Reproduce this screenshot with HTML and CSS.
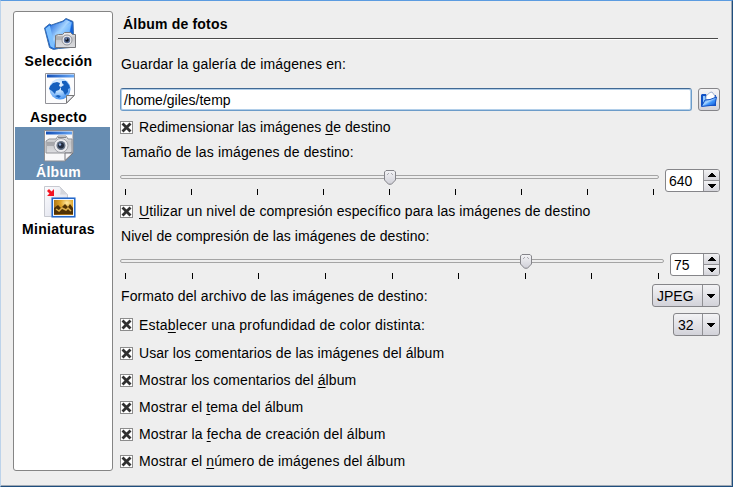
FILE: index.html
```html
<!DOCTYPE html>
<html lang="es">
<head>
<meta charset="utf-8">
<title>Álbum de fotos</title>
<link rel="stylesheet" href="styles.css">
</head>
<body>
<svg class="defs" width="0" height="0">
  <defs>
    <linearGradient id="blue" x1="0" y1="0" x2="1" y2="1"><stop offset="0" stop-color="#0b58d8"/><stop offset=".45" stop-color="#a8d6ff"/><stop offset=".6" stop-color="#3c92fa"/><stop offset="1" stop-color="#0750cf"/></linearGradient>
    <linearGradient id="silver" x1="0" y1="0" x2="0" y2="1"><stop offset="0" stop-color="#f4f4f5"/><stop offset=".35" stop-color="#c5c6c9"/><stop offset="1" stop-color="#dcdde0"/></linearGradient>
    <radialGradient id="globe" cx=".4" cy=".3" r=".75"><stop offset="0" stop-color="#fff"/><stop offset=".45" stop-color="#b9dcff"/><stop offset="1" stop-color="#3b8df0"/></radialGradient>
    <linearGradient id="bar" gradientUnits="userSpaceOnUse" x1="4" y1="0" x2="30" y2="0"><stop offset="0" stop-color="#1450b8"/><stop offset="1" stop-color="#66a6f4"/></linearGradient>
    <radialGradient id="gold" cx=".65" cy=".25" r=".8"><stop offset="0" stop-color="#ffe9a0"/><stop offset=".35" stop-color="#e0a62c"/><stop offset="1" stop-color="#8a5408"/></radialGradient>
    <linearGradient id="page" x1="0" y1="0" x2="1" y2="1"><stop offset="0" stop-color="#fdfdff"/><stop offset="1" stop-color="#d9dce8"/></linearGradient>
    <linearGradient id="knob" x1="0" y1="0" x2="0" y2="1"><stop offset="0" stop-color="#f4f4f6"/><stop offset="1" stop-color="#d0d0d8"/></linearGradient>
    <symbol id="x" viewBox="0 0 13 13"><rect x=".5" y=".5" width="12" height="12" fill="#fff" stroke="#8c8c8c"/><path d="M3.500 3.500l6 6M9.500 3.500l-6 6" stroke="#303030" stroke-width="2.800" stroke-linecap="square"/></symbol>
    <symbol id="thumb" viewBox="0 0 12 15"><path d="M2 .5h8L11.500 2v8L7.500 14.200h-3L.5 10V2z" fill="url(#knob)" stroke="#85858a"/><path d="M3 4.500h1M8 4.500h1M4 3.500h1M7 3.500h1" stroke="#aaaab0"/></symbol>
    <symbol id="down" viewBox="0 0 8 4"><path d="M0 0h8v1H7v1H6v1H5v1H3V3H2V2H1V1H0z"/></symbol>
  </defs>
</svg>
<div class="window">
  <nav class="sidebar">
    <div class="item">
      <svg width="34" height="34" viewBox="0 0 34 34">
        <path d="M1.500 11l5-4 2 1L20 4l3-2.500 7 3 .5 14-3 12-12 1-5 1-4-2z" fill="#1261d8" stroke="#3f6fa8"/>
        <path d="M2.500 11.500l4-3 5 5 0 18-4-2z" fill="#7dc0ff"/>
        <path d="M7 9l13-4 3-2.500 6 3-3 15-14 10z" fill="url(#blue)"/>
        <path d="M12 16L28 6l-2 12-13 9z" fill="#9acfff" opacity=".65"/>
        <path d="M12.500 18.500l3-1h4l2-2h6l2 2h3v13h-20z" fill="url(#silver)" stroke="#77787c"/>
        <path d="M13 20h7M13 22h6" stroke="#999"/>
        <circle cx="24" cy="23" r="5" fill="#ededf0" stroke="#909298"/><circle cx="24" cy="23" r="3.200" fill="#5a6f97"/><circle cx="24" cy="23" r="1.800" fill="#10151f"/><circle cx="23.200" cy="22" r=".7" fill="#a7c4f2"/>
      </svg>
      <span>Selección</span>
    </div>
    <div class="item second">
      <svg width="34" height="34" viewBox="0 0 34 34">
        <path d="M2.500 1.500h29v22l-8 8h-21z" fill="#fcfcfd" stroke="#929298"/>
        <path d="M4 4h27" stroke="url(#bar)" stroke-width="3"/>
        <circle cx="17" cy="17" r="10.500" fill="url(#globe)"/>
        <path d="M7 14l3-3 4-1 3 1-1 3 2 1-2 3-3 1-1 3-3-3-3-2zM19 9l4 0 3 4 1 3-2 1 0 3-3 3-2-4-2-1 0-3 3-2-2-2zM12 24l3-1 3 1-2 2z" fill="#155fbd"/>
        <path d="M23.500 31v-7.500h7.500z" fill="#efeff4" stroke="#777"/>
      </svg>
      <span>Aspecto</span>
    </div>
    <div class="item selected">
      <svg width="34" height="34" viewBox="0 0 34 34">
        <path d="M1.500 2.500h28.500v22.500l-8 8H1.500z" fill="#f8f8f9" stroke="#8d8d91"/>
        <path d="M3 5h26" stroke="url(#bar)" stroke-width="3"/>
        <path d="M3 13l3-2h7l2-3h8l2 3h4v13l-3 1H3z" fill="url(#silver)" stroke="#909196"/>
        <path d="M15 9.500h8M4 15h8M4 17h7" stroke="#85868b"/>
        <circle cx="18" cy="17.500" r="7" fill="#ececef" stroke="#a0a2a7"/><circle cx="18" cy="17.500" r="4.500" fill="#667386"/><circle cx="18" cy="17.500" r="3" fill="#222c3e"/><circle cx="17" cy="16.500" r="1.200" fill="#92adde"/>
        <path d="M22 32.500v-7.500h8z" fill="#f6f6f8" stroke="#77777c"/>
      </svg>
      <span>Álbum</span>
    </div>
    <div class="item fourth">
      <svg width="34" height="34" viewBox="0 0 34 34">
        <path d="M1.500 1.500h15l8 8v22h-23z" fill="url(#page)" stroke="#c7c9d0"/>
        <path d="M16 1.500c2 2 2 5 1 8h8z" fill="#d4d6dc"/>
        <path d="M11 4v7H4l2.500-2.500L4 6l2-2 2.500 2.500z" fill="#f31624"/>
        <rect x="9.250" y="13.250" width="22.500" height="18.500" fill="url(#gold)" stroke="#2468ca" stroke-width="1.600"/>
        <rect x="10.500" y="14.500" width="20" height="16" fill="none" stroke="#eef6ff"/>
        <path d="M11 23l4-3 3 3 4-4 3 3 2-3 3 4v6H11z" fill="#503206"/><path d="M13 24l3 2 3-3 4 2 2-2 3 3" fill="none" stroke="#deb04a" stroke-width="1.500"/>
      </svg>
      <span>Miniaturas</span>
    </div>
  </nav>
  <main class="panel">
    <h1>Álbum de fotos</h1>
    <div class="row save"><span class="t loose">Guardar la galería de imágenes en:</span></div>
    <div class="path">
      <div class="input">/home/giles/temp</div>
      <div class="button">
        <svg width="18" height="17" viewBox="0 0 18 17">
          <path d="M1 4l1-1h4l1 2 9-1v11H1z" fill="#1051c5"/>
          <path d="M3 5h2l1 4-3 4z" fill="#8fc8ff"/>
          <path d="M6 5l4-3.500 2-.5 3 4-1 4H6z" fill="#fff" stroke="#8aa0c6" stroke-width=".8"/>
          <path d="M1.500 15.500L5 9l5-.5L16.500 6 15 14z" fill="url(#blue)" stroke="#1452c6"/>
        </svg>
      </div>
    </div>
    <label class="row check resize"><svg><use href="#x"/></svg><span class="t tight">Redimensionar las imágenes <u>d</u>e destino</span></label>
    <div class="row caption"><span class="t loose">Tamaño de las imágenes de destino:</span></div>
    <div class="range">
      <div class="slider">
        <div class="track"></div>
        <svg class="thumb size"><use href="#thumb"/></svg>
        <div class="ticks"><i></i><i></i><i></i><i></i><i></i><i></i><i></i><i></i><i></i></div>
      </div>
      <div class="spin wide"><span>640</span><div class="steps"><b><svg class="up"><use href="#down"/></svg></b><b><svg><use href="#down"/></svg></b></div></div>
    </div>
    <label class="row check compress"><svg><use href="#x"/></svg><span class="t"><u>U</u>tilizar un nivel de compresión específico para las imágenes de destino</span></label>
    <div class="row caption"><span class="t tight">Nivel de compresión de las imágenes de destino:</span></div>
    <div class="range">
      <div class="slider">
        <div class="track"></div>
        <svg class="thumb level"><use href="#thumb"/></svg>
        <div class="ticks"><i></i><i></i><i></i><i></i><i></i><i></i><i></i><i></i><i></i></div>
      </div>
      <div class="spin"><span>75</span><div class="steps"><b><svg class="up"><use href="#down"/></svg></b><b><svg><use href="#down"/></svg></b></div></div>
    </div>
    <div class="choice format"><span class="t">Formato del archivo de las imágenes de destino:</span><div class="combo"><span>JPEG</span><b><svg><use href="#down"/></svg></b></div></div>
    <div class="choice depth"><label class="check"><svg><use href="#x"/></svg><span class="t looser">Esta<u>b</u>lecer una profundidad de color distinta:</span></label><div class="combo short"><span>32</span><b><svg><use href="#down"/></svg></b></div></div>
    <div class="options">
      <label class="check"><svg><use href="#x"/></svg><span class="t tight">Usar los <u>c</u>omentarios de las imágenes del álbum</span></label>
      <label class="check"><svg><use href="#x"/></svg><span class="t">Mostrar los comentarios del <u>á</u>lbum</span></label>
      <label class="check"><svg><use href="#x"/></svg><span class="t">Mostrar el <u>t</u>ema del álbum</span></label>
      <label class="check"><svg><use href="#x"/></svg><span class="t loose">Mostrar la <u>f</u>echa de creación del álbum</span></label>
      <label class="check"><svg><use href="#x"/></svg><span class="t">Mostrar el <u>n</u>úmero de imágenes del álbum</span></label>
    </div>
  </main>
</div>
</body>
</html>
```
FILE: styles.css
```css
* { box-sizing: border-box; }
body { margin: 0; font: 14px/18px "Liberation Sans", Arial, sans-serif; color: #000; background: #eee; }
svg { display: block; flex: none; }
.defs { position: absolute; }
.window {
  width: 733px; height: 487px; display: flex; gap: 5px;
  padding: 10px 12px 0 12px;
  background: #eee;
  border: 1px solid;
  border-color: #5b9be0 #1f4e7e #1f4e7e #bdd3ea;
  box-shadow: inset -1px -1px #a0a9b4;
}
.sidebar {
  width: 100px; height: 460px; padding: 3px 1px 0 1px;
  background: #fff; border: 1px solid #858585; border-radius: 3px;
  font-weight: bold; text-align: center;
}
.item { height: 53px; width: 96px; display: flex; flex-direction: column; align-items: center; padding: 1px 9px 0 0; }
.item:first-child { height: 56px; padding-top: 2px; }
.item.second { height: 56px; padding-top: 1px; }
.item svg { margin: 0 0 1px 2px; }
.item span { white-space: nowrap; letter-spacing: .28px; }
.item.second span { margin-top: 1px; }
.item.selected { width: 95px; padding-right: 8px; background: #678db2; color: #fff; }
.item.fourth { padding-top: 5px; }
.panel { width: 602px; display: flex; flex-direction: column; }
h1 { font-size: 14px; line-height: 18px; letter-spacing: .2px; height: 28px; margin: 0 2px 0 0; padding: 4px 0 0 5px; border-bottom: 1px solid #4a4a4a; box-shadow: 0 1px #fff; }
.row { display: flex; align-items: center; height: 18px; margin-left: 3px; white-space: nowrap; }
.save { margin-top: 16px; }
.path { display: flex; justify-content: space-between; margin: 15px 0 0 2px; height: 23px; }
.input { width: 572px; border: 1px solid #6c9cc9; border-top-color: #416994; box-shadow: inset 0 0 0 1px #b1cee9; border-radius: 3px; background: #fff; padding: 2px 0 0 3px; }
.button { width: 22px; border: 1px solid #858589; border-radius: 3px; display: grid; place-items: center; background: linear-gradient(#f5f5f7, #d3d3da); }
.check { display: flex; align-items: center; gap: 6px; }
.check svg { width: 13px; height: 13px; }
.row.check { margin-left: 2px; }
.resize { margin-top: 7px; }
.caption { margin-top: 7px; }
.t { white-space: nowrap; letter-spacing: .1px; }
.tight { letter-spacing: .07px; }
.loose { letter-spacing: .14px; }
.looser { letter-spacing: .2px; }
u { text-decoration: underline; text-underline-offset: 2px; text-decoration-thickness: 1px; text-decoration-skip-ink: none; }
.range { display: flex; gap: 6px; height: 26px; margin: 8px 0 0 2px; }
.slider { flex: 1; position: relative; padding-top: 6px; }
.track { height: 4px; border: 1px solid #a4a4a4; border-radius: 2px; }
.thumb { position: absolute; top: 1px; width: 12px; height: 15px; }
.size { left: 264px; }
.level { left: 400px; }
.ticks { display: flex; justify-content: space-between; padding: 0 5px; margin-top: 10px; }
.ticks i { width: 1px; height: 6px; background: #000; }
.spin { display: flex; width: 50px; height: 23px; border: 1px solid #858589; border-radius: 3px; background: #fff; overflow: hidden; }
.spin.wide { width: 55px; }
.spin span { flex: 1; padding: 2px 0 0 3px; }
.steps { width: 16px; border-left: 1px solid #909094; display: flex; flex-direction: column; }
.steps b { flex: 1; display: grid; place-items: center; background: linear-gradient(#f1f1f3, #d4d4da); }
.steps b + b { border-top: 1px solid #909094; }
.steps svg, .combo svg { width: 8px; height: 4px; }
.up { transform: scaleY(-1); }
.compress { margin-top: 7px; }
.choice { display: flex; justify-content: space-between; align-items: center; height: 23px; margin: 5px 0 0 3px; }
.combo { display: flex; width: 68px; height: 23px; border: 1px solid #858589; border-radius: 3px; background: linear-gradient(#f3f3f5, #d2d2d9); }
.combo.short { width: 47px; }
.combo span { flex: 1; padding: 2px 0 0 4px; }
.combo b { width: 17px; border-left: 1px solid #909094; display: grid; place-items: center; }
.choice.depth { margin: 6px 0 0 2px; }
.options { display: flex; flex-direction: column; gap: 9px; margin: 8px 0 0 2px; }
```
